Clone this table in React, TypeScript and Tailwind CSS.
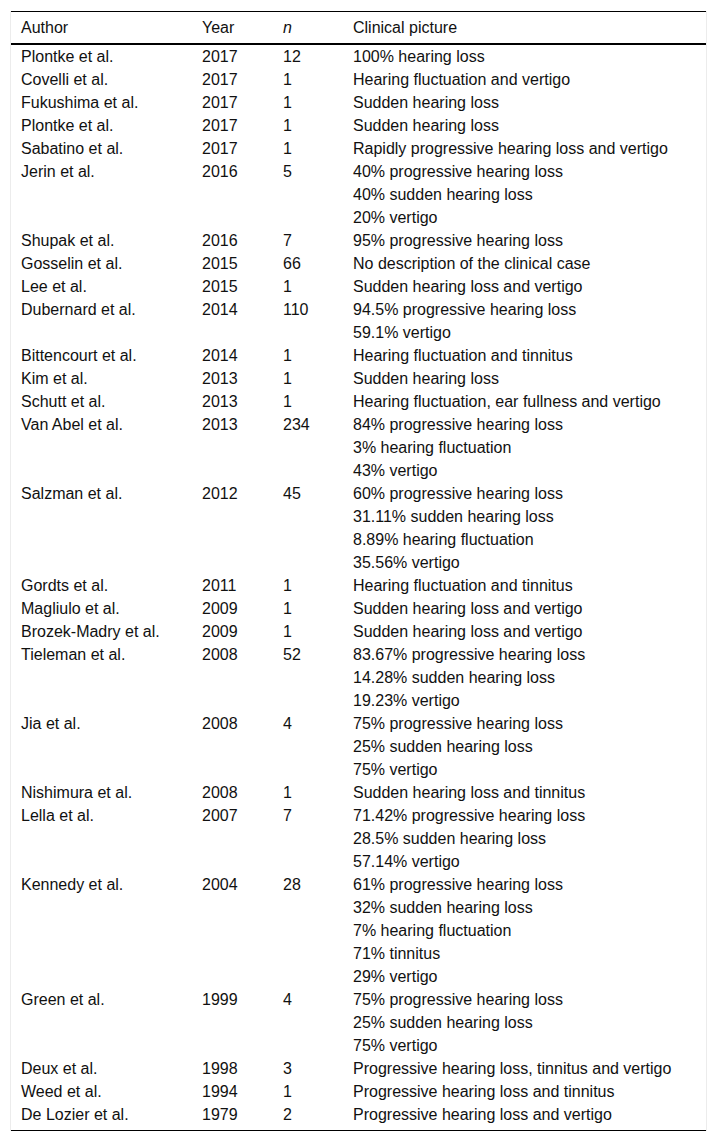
import React from "react";

const rows: [string, string, string, string[]][] = [
  ["Plontke et al.", "2017", "12", ["100% hearing loss"]],
  ["Covelli et al.", "2017", "1", ["Hearing fluctuation and vertigo"]],
  ["Fukushima et al.", "2017", "1", ["Sudden hearing loss"]],
  ["Plontke et al.", "2017", "1", ["Sudden hearing loss"]],
  ["Sabatino et al.", "2017", "1", ["Rapidly progressive hearing loss and vertigo"]],
  ["Jerin et al.", "2016", "5", ["40% progressive hearing loss", "40% sudden hearing loss", "20% vertigo"]],
  ["Shupak et al.", "2016", "7", ["95% progressive hearing loss"]],
  ["Gosselin et al.", "2015", "66", ["No description of the clinical case"]],
  ["Lee et al.", "2015", "1", ["Sudden hearing loss and vertigo"]],
  ["Dubernard et al.", "2014", "110", ["94.5% progressive hearing loss", "59.1% vertigo"]],
  ["Bittencourt et al.", "2014", "1", ["Hearing fluctuation and tinnitus"]],
  ["Kim et al.", "2013", "1", ["Sudden hearing loss"]],
  ["Schutt et al.", "2013", "1", ["Hearing fluctuation, ear fullness and vertigo"]],
  ["Van Abel et al.", "2013", "234", ["84% progressive hearing loss", "3% hearing fluctuation", "43% vertigo"]],
  ["Salzman et al.", "2012", "45", ["60% progressive hearing loss", "31.11% sudden hearing loss", "8.89% hearing fluctuation", "35.56% vertigo"]],
  ["Gordts et al.", "2011", "1", ["Hearing fluctuation and tinnitus"]],
  ["Magliulo et al.", "2009", "1", ["Sudden hearing loss and vertigo"]],
  ["Brozek-Madry et al.", "2009", "1", ["Sudden hearing loss and vertigo"]],
  ["Tieleman et al.", "2008", "52", ["83.67% progressive hearing loss", "14.28% sudden hearing loss", "19.23% vertigo"]],
  ["Jia et al.", "2008", "4", ["75% progressive hearing loss", "25% sudden hearing loss", "75% vertigo"]],
  ["Nishimura et al.", "2008", "1", ["Sudden hearing loss and tinnitus"]],
  ["Lella et al.", "2007", "7", ["71.42% progressive hearing loss", "28.5% sudden hearing loss", "57.14% vertigo"]],
  ["Kennedy et al.", "2004", "28", ["61% progressive hearing loss", "32% sudden hearing loss", "7% hearing fluctuation", "71% tinnitus", "29% vertigo"]],
  ["Green et al.", "1999", "4", ["75% progressive hearing loss", "25% sudden hearing loss", "75% vertigo"]],
  ["Deux et al.", "1998", "3", ["Progressive hearing loss, tinnitus and vertigo"]],
  ["Weed et al.", "1994", "1", ["Progressive hearing loss and tinnitus"]],
  ["De Lozier et al.", "1979", "2", ["Progressive hearing loss and vertigo"]],
];

export default function App() {
  return (
    <div className="bg-white w-[716px] min-h-[1143px] pt-[11px] pl-[10px] font-['Liberation_Sans',Arial,sans-serif]">
      <div className="w-[697px] border-x border-[#ececec]">
        <table className="table-fixed w-[695px] border-collapse text-[16px] leading-[23px] text-[#111]">
          <colgroup>
            <col className="w-[181px]" />
            <col className="w-[81px]" />
            <col className="w-[70px]" />
            <col className="w-[363px]" />
          </colgroup>
          <thead>
            <tr className="border-t border-b-2 border-black">
              <th className="font-normal text-left pl-[10px] pt-[4px] pb-[4px]">Author</th>
              <th className="font-normal text-left pl-[10px] pt-[4px] pb-[4px]">Year</th>
              <th className="font-normal italic text-left pl-[10px] pt-[4px] pb-[4px]">n</th>
              <th className="font-normal text-left pl-[10px] pt-[4px] pb-[4px]">Clinical picture</th>
            </tr>
          </thead>
          <tbody className="border-b border-black">
            {rows.map((r, i) => (
              <tr key={i} className="align-top">
                <td className={`pl-[10px] ${i === rows.length - 1 ? "pb-[4px]" : ""}`}>{r[0]}</td>
                <td className="pl-[10px]">{r[1]}</td>
                <td className="pl-[10px]">{r[2]}</td>
                <td className="pl-[10px] whitespace-nowrap">
                  {r[3].map((l, j) => (
                    <div key={j}>{l}</div>
                  ))}
                </td>
              </tr>
            ))}
          </tbody>
        </table>
      </div>
    </div>
  );
}
